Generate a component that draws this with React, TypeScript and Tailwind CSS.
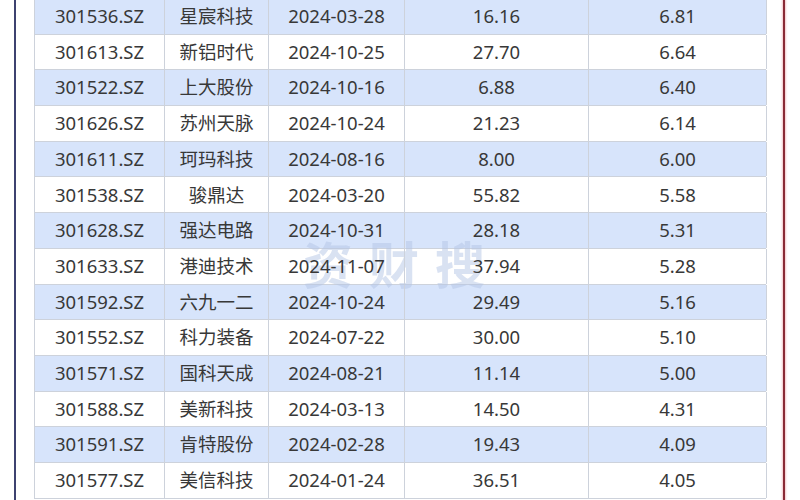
const rows: [string, string, string, string, string][] = [
  ["301536.SZ", "星宸科技", "2024-03-28", "16.16", "6.81"],
  ["301613.SZ", "新铝时代", "2024-10-25", "27.70", "6.64"],
  ["301522.SZ", "上大股份", "2024-10-16", "6.88", "6.40"],
  ["301626.SZ", "苏州天脉", "2024-10-24", "21.23", "6.14"],
  ["301611.SZ", "珂玛科技", "2024-08-16", "8.00", "6.00"],
  ["301538.SZ", "骏鼎达", "2024-03-20", "55.82", "5.58"],
  ["301628.SZ", "强达电路", "2024-10-31", "28.18", "5.31"],
  ["301633.SZ", "港迪技术", "2024-11-07", "37.94", "5.28"],
  ["301592.SZ", "六九一二", "2024-10-24", "29.49", "5.16"],
  ["301552.SZ", "科力装备", "2024-07-22", "30.00", "5.10"],
  ["301571.SZ", "国科天成", "2024-08-21", "11.14", "5.00"],
  ["301588.SZ", "美新科技", "2024-03-13", "14.50", "4.31"],
  ["301591.SZ", "肯特股份", "2024-02-28", "19.43", "4.09"],
  ["301577.SZ", "美信科技", "2024-01-24", "36.51", "4.05"],
];

export default function App() {
  return (
    <div
      className="relative w-[800px] h-[500px] overflow-hidden bg-white flex items-start text-[18.5px] text-[#383838]"
      style={{ fontFamily: '"Noto Sans", "Noto Sans CJK SC", sans-serif' }}
    >
      <div className="ml-[14px] w-[2px] h-[500px] bg-[#3d4270] shrink-0" />
      <div className="relative ml-[18px] -mt-[1px] w-[732px] shrink-0 border-l border-[#cdd2db]">
        {/* watermark, sits behind the cell text */}
        <div
          className="absolute left-[268px] top-[238px] flex gap-[16px] text-[50px] font-bold text-[#b5c6e6] opacity-50 leading-none pointer-events-none"
          style={{ fontFamily: '"Noto Sans CJK SC", sans-serif' }}
        >
          <span>资</span>
          <span>财</span>
          <span>搜</span>
        </div>
        {rows.map((r, i) => (
          <div
            key={r[0]}
            className={`grid grid-cols-[130px_104px_136px_184px_178px] h-[35.7px] border-b border-[#cdd2db] ${
              i % 2 === 0 ? "bg-[#d7e4fb]" : "bg-white"
            }`}
          >
            {r.map((c, j) => (
              <div key={j} className="relative flex items-center justify-center border-r border-[#cdd2db] leading-none">
                {c}
              </div>
            ))}
          </div>
        ))}
      </div>
      <div className="ml-[17px] w-[2px] h-[500px] bg-[#8a2a35] shadow-[0_0_2px_1px_#f3c6c9] shrink-0" />
    </div>
  );
}
